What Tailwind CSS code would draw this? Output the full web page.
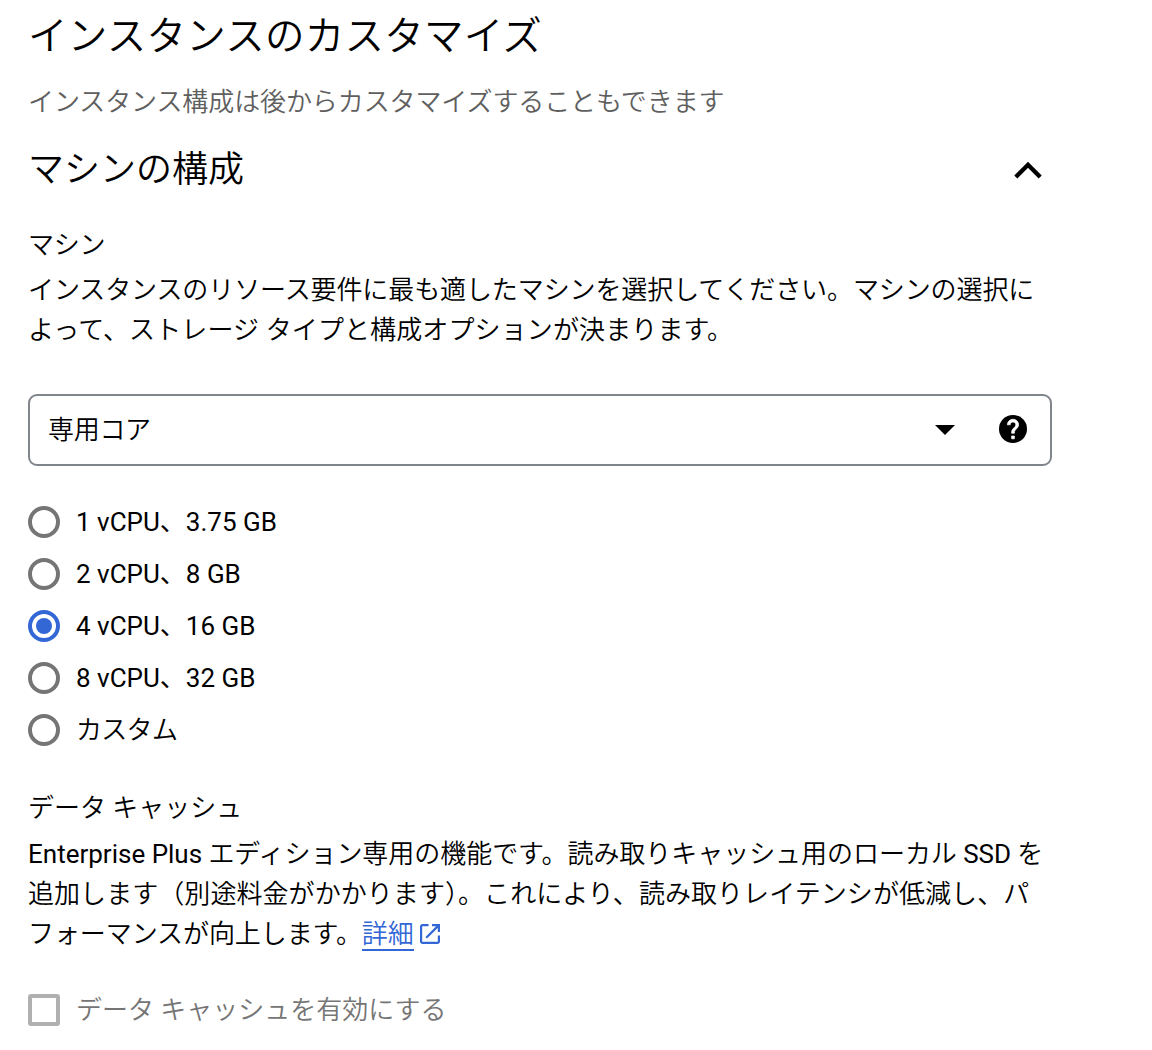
<!DOCTYPE html>
<html lang="ja">
<head>
  <meta charset="UTF-8" />
  <title>インスタンスのカスタマイズ</title>
  <meta name="viewport" content="width=device-width, initial-scale=1.0">
  <script src="https://cdn.jsdelivr.net/npm/@tailwindcss/browser@4"></script>
</head>
<body class="bg-white h-[1050px] overflow-hidden text-black font-[Roboto,'Noto_Sans_CJK_JP',sans-serif] font-[350] text-[26px] leading-10">

  <div class="w-[1024px] ml-7 whitespace-nowrap">
    <h1 class="pt-[13px] text-[39.5px] leading-[48px] tracking-[0.25px]">インスタンスのカスタマイズ</h1>
    <p class="mt-[21px] text-[#5f5f5f] tracking-[-0.1px]">インスタンス構成は後からカスタマイズすることもできます</p>

    <!-- Machine configuration -->
    <div class="mt-6 flex items-center justify-between pr-[10px]">
      <h2 class="text-[36px] leading-[48px]">マシンの構成</h2>
      <svg class="w-7 h-[18px]" viewBox="0 0 28 18" fill="none" stroke="currentColor" stroke-width="4.4"><path d="M1.8 16 14 3.8 26.2 16"/></svg>
    </div>

    <h3 class="mt-[31px] tracking-[-0.3px]">マシン</h3>
    <p class="mt-[5px]"><span class="tracking-[-0.1px]">インスタンスのリソース要件に最も適したマシンを選択してください。マシンの選択に</span><br><span class="tracking-[0.12px]">よって、ストレージ タイプと構成オプションが決まります。</span></p>

    <div class="mt-11 h-[72px] flex items-center rounded-[9px] border-2 border-[#80868b] pl-[18px] pr-[23px]">
      <span class="flex-1 tracking-[-0.3px]">専用コア</span>
      <svg class="w-5 h-[10px] mr-11" viewBox="0 0 20 10"><path d="M0 0h20L10 10z"/></svg>
      <svg class="w-7 h-7 mb-[2px]" viewBox="2 2 20 20"><circle cx="12" cy="12" r="10"/><path fill="#fff" stroke="#fff" stroke-width=".5" d="M13 19h-2v-2h2v2zm2.07-7.75l-.9.92C13.45 12.9 13 13.5 13 15h-2v-.5c0-1.1.45-2.1 1.17-2.83l1.24-1.26c.37-.36.59-.86.59-1.41 0-1.1-.9-2-2-2s-2 .9-2 2H8c0-2.21 1.79-4 4-4s4 1.79 4 4c0 .88-.36 1.68-.93 2.25z"/></svg>
    </div>

    <div class="mt-[30px]">
      <div class="h-[52px] flex items-center gap-4"><span class="size-8 rounded-full border-4 border-[#757575]"></span><span class="font-normal">1 vCPU、3.75 GB</span></div>
      <div class="h-[52px] flex items-center gap-4"><span class="size-8 rounded-full border-4 border-[#757575]"></span><span class="font-normal">2 vCPU、8 GB</span></div>
      <div class="h-[52px] flex items-center gap-4"><span class="size-8 rounded-full border-4 border-[#3367d6] flex items-center justify-center"><span class="size-4 rounded-full bg-[#3367d6]"></span></span><span class="font-normal">4 vCPU、16 GB</span></div>
      <div class="h-[52px] flex items-center gap-4"><span class="size-8 rounded-full border-4 border-[#757575]"></span><span class="font-normal">8 vCPU、32 GB</span></div>
      <div class="h-[52px] flex items-center gap-4"><span class="size-8 rounded-full border-4 border-[#757575]"></span><span class="tracking-[-0.7px]">カスタム</span></div>
    </div>

    <!-- Data cache -->
    <h3 class="mt-8">データ キャッシュ</h3>
    <p class="mt-[6px]"><span class="font-normal">Enterprise Plus</span><span class="tracking-[-0.04px]"> エディション専用の機能です。読み取りキャッシュ用のローカル <span class="font-normal">SSD</span> を</span><br><span class="tracking-[0.06px]">追加します（別途料金がかかります）。これにより、読み取りレイテンシが低減し、パ</span><br><span class="tracking-[-0.08px]">フォーマンスが向上します。</span><a class="text-[#3367d6] inline-block h-[37px] border-b-2 border-[#3367d6]">詳細</a><svg class="inline-block ml-[6px] size-[20px] align-[-1px]" viewBox="0 0 20 20" fill="none" stroke="#3367d6" stroke-width="2.2"><path d="M8.5 1.1H2.6A1.5 1.5 0 0 0 1.1 2.6v14.8a1.5 1.5 0 0 0 1.5 1.5h14.8a1.5 1.5 0 0 0 1.5-1.5v-5.9M12 1.1h6.9V8M18.4 1.6 6.2 13.8"/></svg></p>

    <div class="mt-9 flex items-center gap-4 text-[#757575]"><span class="size-8 rounded-[3px] border-4 border-[#b0b0b0]"></span><span>データ キャッシュを有効にする</span></div>
  </div>

</body>
</html>
